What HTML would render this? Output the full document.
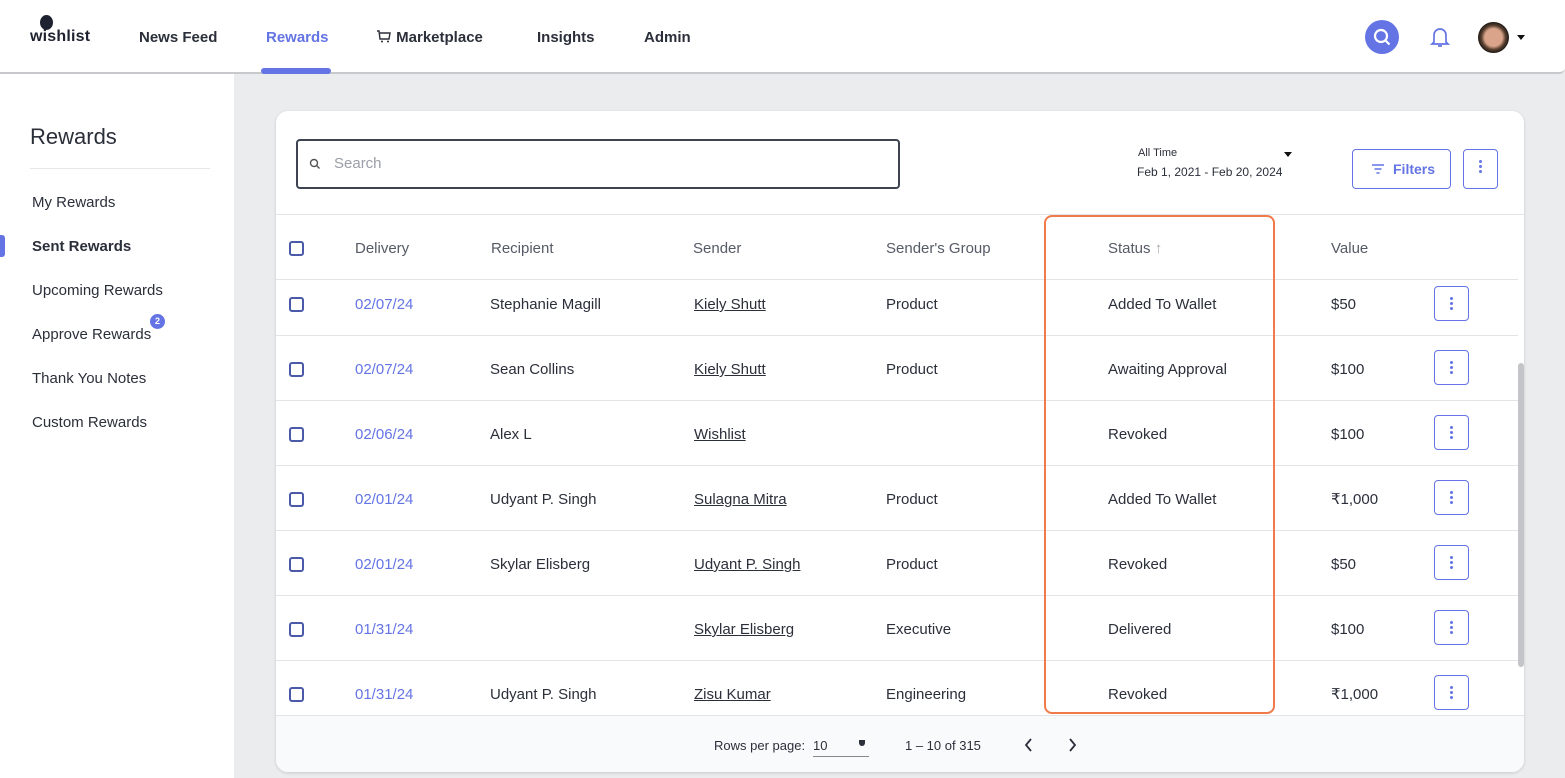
<!DOCTYPE html>
<html><head><style>
*{box-sizing:border-box;margin:0;padding:0}
body{width:1565px;height:778px;overflow:hidden;background:#ebecee;font-family:"Liberation Sans",sans-serif;color:#2b2f3a;position:relative}
.nav{position:absolute;left:0;top:0;width:1565px;height:74px;background:#fff;border-bottom:2px solid #c8c9cc;border-radius:0 0 6px 0}
.nav .i{position:absolute;top:29px;font-size:15px;font-weight:bold;color:#2b2f3a}
.side{position:absolute;left:0;top:74px;width:234px;height:704px;background:#fff}
.side h1{position:absolute;left:30px;top:50px;font-size:22px;font-weight:normal;color:#2b2f3a}
.side .hr{position:absolute;left:30px;top:94px;width:180px;border-top:1px solid #e6e7ea}
.side .l{position:absolute;left:32px;font-size:15px;color:#2b2f3a}
.card{position:absolute;left:276px;top:111px;width:1248px;height:661px;background:#fff;border-radius:12px;box-shadow:0 1px 3px rgba(0,0,0,.15);overflow:hidden}
.search{position:absolute;left:20px;top:28px;width:604px;height:50px;border:2px solid #3d4350;border-radius:4px}
.search span{position:absolute;left:36px;top:14px;color:#9a9ea8;font-size:15px}
.row{position:absolute;left:0;width:1242px;height:65px;border-bottom:1px solid #e3e4e8;font-size:15px}
.row div{position:absolute;top:2px;line-height:64px}
.cb{position:absolute;left:13px;width:15px;height:15px;border:2px solid #4a5aa8;border-radius:3px}
.mb{position:absolute;left:1158px;width:35px;height:35px;border:1px solid #6474e5;border-radius:4px}
.mb:after{content:"";position:absolute;left:15px;top:10px;width:3px;height:3px;border-radius:50%;background:#6474e5;box-shadow:0 5px 0 #6474e5,0 10px 0 #6474e5}
.d{color:#6474e5}.u{text-decoration:underline}
</style></head><body>
<div class="nav">
<div style="position:absolute;left:30px;top:15px"><div style="position:absolute;left:10px;top:0;width:13px;height:15px;border-radius:50%;background:#1e2230"></div><div style="position:absolute;top:13px;font-size:16px;font-weight:bold;letter-spacing:.2px;color:#1e2230">wishlist</div></div>
<div class="i" style="left:139px">News Feed</div>
<div class="i" style="left:266px;color:#6474e5">Rewards</div>
<div style="position:absolute;left:261px;top:68px;width:70px;height:6px;background:#6474e5;border-radius:3px"></div>
<div class="i" style="left:376px"><svg width="16" height="14" viewBox="0 0 16 14" style="vertical-align:-1px"><path d="M1 2h2l1 8h9l1-6H4" fill="none" stroke="#2b2f3a" stroke-width="1.4"/><circle cx="6" cy="12.5" r="1" fill="#2b2f3a"/><circle cx="12" cy="12.5" r="1" fill="#2b2f3a"/></svg> Marketplace</div>
<div class="i" style="left:537px">Insights</div>
<div class="i" style="left:644px">Admin</div>
<div style="position:absolute;left:1365px;top:20px;width:34px;height:34px;border-radius:50%;background:#6474e5"><svg width="34" height="34"><circle cx="16" cy="16" r="6" fill="none" stroke="#fff" stroke-width="2.2"/><path d="M20.5 20.5l4 4" stroke="#fff" stroke-width="2.2"/></svg></div>
<svg style="position:absolute;left:1429px;top:25px" width="22" height="24"><path d="M5 17V10a6 6 0 0112 0v7l2 2H3z M9 21h4" fill="none" stroke="#6474e5" stroke-width="1.7"/></svg>
<div style="position:absolute;left:1478px;top:22px;width:31px;height:31px;border-radius:50%;background:radial-gradient(circle at 50% 50%,#d9a48a 0 40%,#5a4030 55%,#1f1a14 70%)"></div>
<div style="position:absolute;left:1517px;top:35px;border:4px solid transparent;border-top:5px solid #111"></div>
</div>
<div class="side">
<h1>Rewards</h1><div class="hr"></div>
<div class="l" style="top:120px">My Rewards</div>
<div style="position:absolute;left:0;top:161px;width:5px;height:22px;background:#6474e5;border-radius:0 3px 3px 0"></div>
<div class="l" style="top:164px;font-weight:bold">Sent Rewards</div>
<div class="l" style="top:208px">Upcoming Rewards</div>
<div class="l" style="top:252px">Approve Rewards</div>
<div style="position:absolute;left:150px;top:240px;width:15px;height:15px;border-radius:50%;background:#6474e5;color:#fff;font-size:9px;text-align:center;line-height:15px;font-weight:bold">2</div>
<div class="l" style="top:296px">Thank You Notes</div>
<div class="l" style="top:340px">Custom Rewards</div>
</div>
<div class="card">
<div class="search"><svg style="position:absolute;left:11px;top:17px" width="12" height="12"><circle cx="5" cy="5" r="3.5" fill="none" stroke="#555" stroke-width="1.4"/><path d="M7.5 7.5l3 3" stroke="#555" stroke-width="1.4"/></svg><span>Search</span></div>
<div style="position:absolute;left:862px;top:36px;font-size:11px;color:#2b2f3a">All Time</div>
<div style="position:absolute;left:861px;top:54px;font-size:12px;color:#2b2f3a">Feb 1, 2021 - Feb 20, 2024</div>
<div style="position:absolute;left:1008px;top:41px;border:4px solid transparent;border-top:5px solid #111"></div>
<div style="position:absolute;left:1076px;top:38px;width:99px;height:40px;border:1px solid #6474e5;border-radius:4px;color:#6474e5;font-weight:bold;font-size:14px;line-height:38px;padding-left:40px"><svg style="position:absolute;left:18px;top:13px" width="14" height="12"><path d="M1 2h12M3.5 6h7M5.5 10h3" stroke="#6474e5" stroke-width="1.5"/></svg>Filters</div>
<div class="mb" style="left:1187px;top:38px;width:35px;height:40px"></div>
<div style="position:absolute;left:0;top:103px;width:1248px;border-top:1px solid #e3e4e8"></div>
<div class="row" style="top:104px;height:65px;color:#555a66">
<span class="cb" style="top:26px"></span>
<div style="left:79px">Delivery</div><div style="left:215px">Recipient</div><div style="left:417px">Sender</div><div style="left:610px">Sender's Group</div><div style="left:832px">Status <span style="color:#aaa">↑</span></div><div style="left:1055px">Value</div></div>
<div class="row" style="top:169px;height:56px"><span class="cb" style="top:17px"></span><div class="d" style="left:79px;line-height:46px">02/07/24</div><div style="left:214px;line-height:46px">Stephanie Magill</div><div class="u" style="left:418px;line-height:46px">Kiely Shutt</div><div style="left:610px;line-height:46px">Product</div><div style="left:832px;line-height:46px">Added To Wallet</div><div style="left:1055px;line-height:46px">$50</div><span class="mb" style="top:6px"></span></div>
<div class="row" style="top:225px"><span class="cb" style="top:26px"></span><div class="d" style="left:79px">02/07/24</div><div style="left:214px">Sean Collins</div><div class="u" style="left:418px">Kiely Shutt</div><div style="left:610px">Product</div><div style="left:832px">Awaiting Approval</div><div style="left:1055px">$100</div><span class="mb" style="top:14px"></span></div>
<div class="row" style="top:290px"><span class="cb" style="top:26px"></span><div class="d" style="left:79px">02/06/24</div><div style="left:214px">Alex L</div><div class="u" style="left:418px">Wishlist</div><div style="left:832px">Revoked</div><div style="left:1055px">$100</div><span class="mb" style="top:14px"></span></div>
<div class="row" style="top:355px"><span class="cb" style="top:26px"></span><div class="d" style="left:79px">02/01/24</div><div style="left:214px">Udyant P. Singh</div><div class="u" style="left:418px">Sulagna Mitra</div><div style="left:610px">Product</div><div style="left:832px">Added To Wallet</div><div style="left:1055px">₹1,000</div><span class="mb" style="top:14px"></span></div>
<div class="row" style="top:420px"><span class="cb" style="top:26px"></span><div class="d" style="left:79px">02/01/24</div><div style="left:214px">Skylar Elisberg</div><div class="u" style="left:418px">Udyant P. Singh</div><div style="left:610px">Product</div><div style="left:832px">Revoked</div><div style="left:1055px">$50</div><span class="mb" style="top:14px"></span></div>
<div class="row" style="top:485px"><span class="cb" style="top:26px"></span><div class="d" style="left:79px">01/31/24</div><div class="u" style="left:418px">Skylar Elisberg</div><div style="left:610px">Executive</div><div style="left:832px">Delivered</div><div style="left:1055px">$100</div><span class="mb" style="top:14px"></span></div>
<div class="row" style="top:550px;height:55px;border:0"><span class="cb" style="top:26px"></span><div class="d" style="left:79px">01/31/24</div><div style="left:214px">Udyant P. Singh</div><div class="u" style="left:418px">Zisu Kumar</div><div style="left:610px">Engineering</div><div style="left:832px">Revoked</div><div style="left:1055px">₹1,000</div><span class="mb" style="top:14px"></span></div>
<div style="position:absolute;left:1242px;top:252px;width:6px;height:304px;background:#c4c5c8;border-radius:3px"></div>
<div style="position:absolute;left:0;top:604px;width:1248px;height:57px;background:#f9fafc;border-top:1px solid #e3e4e8;font-size:13px">
<div style="position:absolute;left:438px;top:22px">Rows per page:</div>
<div style="position:absolute;left:537px;top:22px;width:56px;height:19px;border-bottom:1px solid #888">10</div>
<div style="position:absolute;left:583px;top:24px;width:6px;height:6px;background:#2b2f3a;border-radius:0 0 3px 3px"></div>
<div style="position:absolute;left:629px;top:22px">1 – 10 of 315</div>
<svg style="position:absolute;left:748px;top:21px" width="60" height="16"><path d="M7 2l-5 6 5 6M46 2l5 6-5 6" fill="none" stroke="#2b2f3a" stroke-width="1.8"/></svg>
</div>
</div>
<div style="position:absolute;left:1044px;top:215px;width:231px;height:499px;border:2px solid #f07a4a;border-radius:8px"></div>
</body></html>
